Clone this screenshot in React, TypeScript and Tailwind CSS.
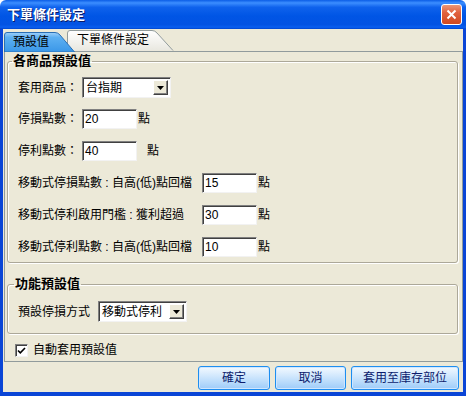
import React from "react";

const TextBox: React.FC<{ value: string; className?: string }> = ({ value, className }) => (
  <div
    className={
      "h-[20px] bg-white border border-t-[#808080] border-l-[#808080] border-b-[#f2f2f2] border-r-[#f2f2f2] shadow-[inset_1px_1px_0_#404040] pl-[2px] text-[12px] leading-[18px] text-black " +
      (className ?? "")
    }
  >
    {value}
  </div>
);

const Combo: React.FC<{ value: string }> = ({ value }) => (
  <div className="h-[21px] w-[89px] bg-white border border-t-[#808080] border-l-[#808080] border-b-[#f2f2f2] border-r-[#f2f2f2] shadow-[inset_1px_1px_0_#404040] flex items-center justify-between pl-[3px] pr-[2px]">
    <span className="text-[12px] leading-[14px] text-black">{value}</span>
    <div className="h-[15px] w-[15px] bg-[#ece9d8] border border-t-[#ffffff] border-l-[#ffffff] border-b-[#404040] border-r-[#404040] shadow-[inset_-1px_-1px_0_#808080] flex items-center justify-center">
      <svg width="7" height="4" viewBox="0 0 7 4">
        <path d="M0 0h7L3.5 4z" fill="#000" />
      </svg>
    </div>
  </div>
);

const Legend: React.FC<{ text: string; className?: string }> = ({ text, className }) => (
  <legend className={"px-[1px] text-[13px] leading-[14px] font-bold text-black " + (className ?? "")}>
    {text}
  </legend>
);

const XpButton: React.FC<{ label: string; className: string }> = ({ label, className }) => (
  <button
    className={
      "h-[24px] rounded-[3px] border border-[#1d8ef0] bg-[linear-gradient(to_bottom,#f3f9ff_0%,#d6eafd_35%,#b3d8fb_75%,#9ecbf8_100%)] shadow-[inset_0_0_0_1px_#cfe6ff] text-[12px] leading-[14px] text-[#0c1c6e] " +
      className
    }
  >
    {label}
  </button>
);

export default function App() {
  return (
    <div className="w-[466px] h-[396px] flex flex-col bg-white font-['Liberation_Sans','Noto_Sans_CJK_TC',sans-serif] select-none">
      {/* title bar */}
      <div className="h-[29px] rounded-t-[6px] bg-[linear-gradient(to_bottom,#0b5de6_0%,#3c8eff_10%,#0f62ec_25%,#0055e5_55%,#0353e3_85%,#0a5ff0_94%,#0044cc_100%)] flex items-center justify-between pl-[7px] pr-[4px]">
        <span className="text-[13px] leading-[14px] font-bold text-white [text-shadow:1px_1px_0_#0a1a66]">
          下單條件設定
        </span>
        <div className="h-[21px] w-[21px] rounded-[3px] border border-white bg-[linear-gradient(to_bottom,#eb9678_0%,#e1623f_40%,#d0481f_100%)] flex items-center justify-center">
          <svg width="11" height="11" viewBox="0 0 11 11">
            <path d="M1.5 1.5l8 8M9.5 1.5l-8 8" stroke="#fff" strokeWidth="2" />
          </svg>
        </div>
      </div>

      {/* body */}
      <div className="flex-1 flex flex-col bg-[#ece9d8] border-l-[3px] border-r-[3px] border-b-[4px] border-[#0a45d6]">
        {/* tabs */}
        <div className="h-[22px] flex items-end pl-[1px]">
          <div className="relative z-10 h-[20px] w-[72px] -mb-[1px]">
            <svg className="absolute inset-0" width="72" height="20" viewBox="0 0 72 20">
              <defs>
                <linearGradient id="selTab" x1="0" y1="0" x2="0" y2="1">
                  <stop offset="0" stopColor="#9fd0fa" />
                  <stop offset="0.25" stopColor="#5db0f2" />
                  <stop offset="1" stopColor="#3a97e8" />
                </linearGradient>
              </defs>
              <path d="M0.5 20V3Q0.5 0.5 3 0.5H51Q54 0.5 56 3L70.5 20Z" fill="url(#selTab)" stroke="#2a6fb5" />
            </svg>
            <span className="absolute left-[9px] top-[3px] text-[12px] leading-[14px] text-black">預設值</span>
          </div>
          <div className="relative h-[21px] w-[107px] -ml-[9px]">
            <svg className="absolute inset-0" width="107" height="21" viewBox="0 0 107 21">
              <defs>
                <linearGradient id="tab2" x1="0" y1="0" x2="0" y2="1">
                  <stop offset="0" stopColor="#ffffff" />
                  <stop offset="1" stopColor="#e8e7df" />
                </linearGradient>
              </defs>
              <path d="M0.5 21V3Q0.5 0.5 3 0.5H85Q88 0.5 90 3L106 20.5" fill="url(#tab2)" stroke="#919b9c" />
            </svg>
            <span className="absolute left-[10px] top-[3px] text-[12px] leading-[14px] text-black">下單條件設定</span>
          </div>
        </div>

        {/* panel */}
        <div className="h-[311px] ml-[1px] border border-[#919b9c] flex flex-col pl-[2px] pr-[4px]">
          <fieldset className="mt-[2px] rounded-[3px] border border-[#aca899] shadow-[inset_1px_1px_0_#fff,1px_1px_0_#fff] pl-[10px] pt-[9px] pb-[5px]">
            <Legend text="各商品預設值" className="-ml-[6px]" />
            <div className="flex items-center h-[21px] text-[12px] leading-[14px] text-black">
              <span className="w-[64px]">套用商品：</span>
              <Combo value="台指期" />
            </div>
            <div className="flex items-center h-[20px] mt-[11px] text-[12px] leading-[14px] text-black">
              <span className="w-[64px]">停損點數：</span>
              <TextBox value="20" className="w-[55px]" />
              <span className="ml-[1px]">點</span>
            </div>
            <div className="flex items-center h-[20px] mt-[12px] text-[12px] leading-[14px] text-black">
              <span className="w-[64px]">停利點數：</span>
              <TextBox value="40" className="w-[55px]" />
              <span className="ml-[10px]">點</span>
            </div>
            <div className="flex items-center h-[20px] mt-[12px] text-[12px] leading-[14px] text-black">
              <span className="w-[184px]">移動式停損點數 : 自高(低)點回檔</span>
              <TextBox value="15" className="w-[55px]" />
              <span className="ml-[1px]">點</span>
            </div>
            <div className="flex items-center h-[20px] mt-[12px] text-[12px] leading-[14px] text-black">
              <span className="w-[184px]">移動式停利啟用門檻 : 獲利超過</span>
              <TextBox value="30" className="w-[55px]" />
              <span className="ml-[1px]">點</span>
            </div>
            <div className="flex items-center h-[20px] mt-[12px] text-[12px] leading-[14px] text-black">
              <span className="w-[184px]">移動式停利點數 : 自高(低)點回檔</span>
              <TextBox value="10" className="w-[55px]" />
              <span className="ml-[1px]">點</span>
            </div>
          </fieldset>

          <fieldset className="mt-[14px] rounded-[3px] border border-[#aca899] shadow-[inset_1px_1px_0_#fff,1px_1px_0_#fff] pl-[10px] pt-[10px] pb-[11px]">
            <Legend text="功能預設值" className="-ml-[4px]" />
            <div className="flex items-center h-[21px] text-[12px] leading-[14px] text-black">
              <span className="w-[80px]">預設停損方式</span>
              <Combo value="移動式停利" />
            </div>
          </fieldset>

          <div className="flex items-center mt-[9px] pl-[8px] text-[12px] leading-[14px] text-black">
            <div className="h-[13px] w-[13px] bg-white border border-t-[#808080] border-l-[#808080] border-b-[#f2f2f2] border-r-[#f2f2f2] shadow-[inset_1px_1px_0_#404040] flex items-center justify-center">
              <svg width="9" height="9" viewBox="0 0 9 9">
                <path d="M1 4.5l2.3 2.3L8 2" stroke="#000" strokeWidth="1.6" fill="none" />
              </svg>
            </div>
            <span className="ml-[5px]">自動套用預設值</span>
          </div>
        </div>

        {/* buttons */}
        <div className="flex justify-end gap-[5px] pt-[4px] pr-[4px]">
          <XpButton label="確定" className="w-[72px]" />
          <XpButton label="取消" className="w-[71px]" />
          <XpButton label="套用至庫存部位" className="w-[108px]" />
        </div>
      </div>
    </div>
  );
}
